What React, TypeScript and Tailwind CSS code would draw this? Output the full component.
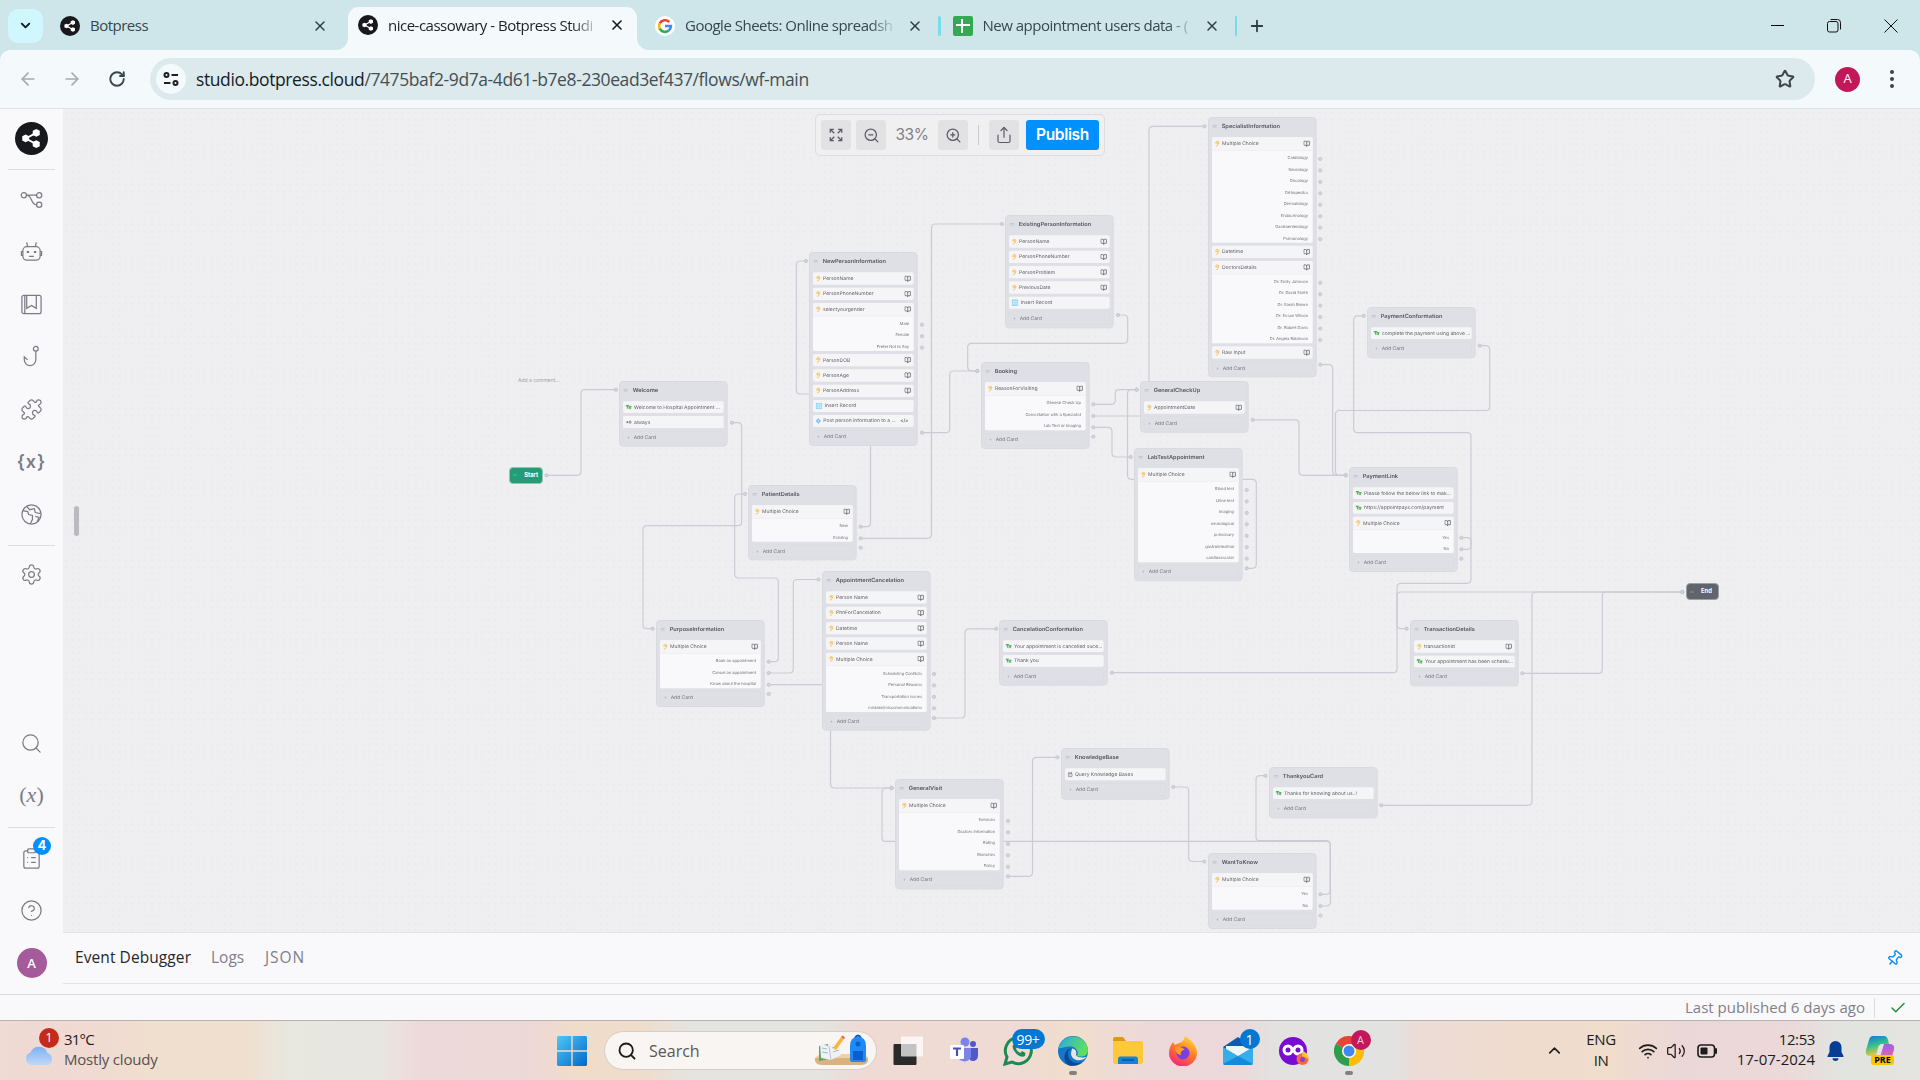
import React from "react";
import {
  ArrowLeft, ArrowRight, RotateCw, X, Plus, Star, ChevronDown, ChevronUp, ZoomIn, ZoomOut, Search, Puzzle,
  Settings, CircleHelp, Pin, Check, Share, Wifi, Volume2, ClipboardList, BookOpen,
} from "lucide-react";

type Card = { k: "ask" | "text" | "always" | "insert" | "post" | "kb"; t: string; o?: string[] };
type NodeT = { x: number; y: number; h: number; t: string; c: Card[] };
const a = (t: string, o?: string[]): Card => ({ k: "ask", t, o });
const s = (t: string): Card => ({ k: "text", t });

const nodes: NodeT[] = [
  { x: 619.3, y: 381, h: 65.7, t: "Welcome", c: [s("Welcome to Hospital Appointment ..."), { k: "always", t: "always" }] },
  {
    x: 809.3, y: 252, h: 194, t: "NewPersonInformation",
    c: [a("PersonName"), a("PersonPhoneNumber"), a("selectyourgender", ["Male", "Female", "Prefer Not to Say"]), a("PersonDOB"), a("PersonAge"), a("PersonAddress"), { k: "insert", t: "Insert Record" }, { k: "post", t: "Post person information to a ..." }],
  },
  { x: 748.3, y: 485.3, h: 75.4, t: "PatientDetails", c: [a("Multiple Choice", ["New", "Existing"])] },
  { x: 1005.3, y: 215, h: 113.3, t: "ExistingPersonInformation", c: [a("PersonName"), a("PersonPhoneNumber"), a("PersonProblem"), a("PreviousDate"), { k: "insert", t: "Insert Record" }] },
  { x: 981.3, y: 362.3, h: 87, t: "Booking", c: [a("ReasonForVisiting", ["General Check Up", "Consultation with a Specialist", "Lab Test or Imaging"])] },
  { x: 1134.3, y: 448, h: 133.3, t: "LabTestAppointment", c: [a("Multiple Choice", ["Blood test", "Urine test", "Imaging", "neurological", "pulmonary", "gastrointestinal", "cardiovascular"])] },
  {
    x: 1208.3, y: 117.3, h: 260.3, t: "SpecialistInformation",
    c: [
      a("Multiple Choice", ["Cardiology", "Neurology", "Oncology", "Orthopedics", "Dermatology", "Endocrinology", "Gastroenterology", "Pulmonology"]),
      a("Datetime"),
      a("DoctorsDetails", ["Dr. Emily Johnson", "Dr. David Smith", "Dr. Sarah Brown", "Dr. Susan Wilson", "Dr. Robert Davis", "Dr. Angela Robinson"]),
      a("Raw Input"),
    ],
  },
  { x: 1140.3, y: 381, h: 51.7, t: "GeneralCheckUp", c: [a("AppointmentDate")] },
  { x: 1367.3, y: 307.3, h: 51.4, t: "PaymentConformation", c: [s("complete the payment using above ...")] },
  { x: 1349.3, y: 466.7, h: 105, t: "PaymentLink", c: [s("Please follow the below link to mak..."), s("https://appointpays.com/payment"), a("Multiple Choice", ["Yes", "No"])] },
  { x: 1410.3, y: 620, h: 66.3, t: "TransactionDetails", c: [a("transactionId"), s("Your appointment has been schedu...")] },
  {
    x: 822.3, y: 571, h: 159.5, t: "AppointmentCancelation",
    c: [a("Person Name"), a("PhnForCancelation"), a("Datetime"), a("Person Name"), a("Multiple Choice", ["Scheduling Conflicts", "Personal Reasons", "Transportation issues", "mistake/miscommunications"])],
  },
  { x: 656.3, y: 620, h: 87, t: "PurposeInformation", c: [a("Multiple Choice", ["Book an appointment", "Cancel an appointment", "Know about the hospital"])] },
  { x: 999.3, y: 620, h: 65.7, t: "CancelationConformation", c: [s("Your appointment is cancelled suce..."), s("Thank you")] },
  { x: 895.3, y: 779.3, h: 110.4, t: "GeneralVisit", c: [a("Multiple Choice", ["Services", "Doctors Information", "Rating", "Branches", "Policy"])] },
  { x: 1061.3, y: 748.3, h: 51.7, t: "KnowledgeBase", c: [{ k: "kb", t: "Query Knowledge Bases" }] },
  { x: 1269.3, y: 767, h: 51.3, t: "ThankyouCard", c: [s("Thanks for knowing about us..!")] },
  { x: 1208.3, y: 852.7, h: 76, t: "WantToKnow", c: [a("Multiple Choice", ["Yes", "No"])] },
];

// Connector polylines in window coordinates; corners are rounded when drawn.
const edges: number[][] = [
  [546.5, 475.3, 581, 475.3, 581, 389.7, 616, 389.7],
  [732, 422.7, 741.7, 422.7, 741.7, 525.7, 643, 525.7, 643, 628.7, 652.7, 628.7],
  [768.7, 661.7, 778.3, 661.7, 778.3, 578, 734.7, 578, 734.7, 494, 745, 494],
  [768.7, 673, 793.3, 673, 793.3, 579.5, 818.5, 579.5],
  [768.7, 684.7, 830.5, 684.7, 830.5, 788, 891.7, 788],
  [860.7, 526.7, 870.5, 526.7, 870.5, 394, 796.3, 394, 796.3, 261, 806, 261],
  [860.7, 538.3, 931.5, 538.3, 931.5, 224, 1002, 224],
  [922, 432.7, 949.7, 432.7, 949.7, 371, 977.3, 371],
  [1118, 315, 1127.7, 315, 1127.7, 343.3, 967.7, 343.3, 967.7, 371, 977.3, 371],
  [1093.3, 404.3, 1115.3, 404.3, 1115.3, 389.7, 1136.7, 389.7],
  [1093.3, 416, 1149, 416, 1149, 126.3, 1204.5, 126.3],
  [1093.3, 427.3, 1112, 427.3, 1112, 457, 1130.7, 457],
  [1246.7, 568.3, 1256.3, 568.3, 1256.3, 479.3, 1127.5, 479.3, 1127.5, 389.7, 1136.7, 389.7],
  [1252.7, 419.8, 1299, 419.8, 1299, 475.3, 1345.7, 475.3],
  [1320.3, 364.7, 1332.7, 364.7, 1332.7, 475.3, 1345.7, 475.3],
  [1479.7, 345.7, 1489.7, 345.7, 1489.7, 410.5, 1335.5, 410.5, 1335.5, 475.3, 1345.7, 475.3],
  [1461.3, 549.3, 1471, 549.3, 1471, 432.7, 1353.7, 432.7, 1353.7, 315.8, 1363.7, 315.8],
  [1461.3, 537.7, 1471, 537.7, 1471, 583.3, 1397, 583.3, 1397, 628.7, 1406.7, 628.7],
  [1112, 672.7, 1397, 672.7, 1397, 592, 1682.3, 592],
  [1522.3, 673.3, 1602.3, 673.3, 1602.3, 592, 1682.3, 592],
  [1381.3, 805.3, 1532, 805.3, 1532, 592, 1682.3, 592],
  [934, 718, 965, 718, 965, 628.8, 996.3, 628.8],
  [1008, 876.3, 1032.5, 876.3, 1032.5, 757.3, 1057.5, 757.3],
  [1173.3, 787, 1188.7, 787, 1188.7, 861.5, 1204.3, 861.5],
  [1320.5, 894.3, 1330.2, 894.3, 1330.2, 840.7, 1256, 840.7, 1256, 775.7, 1265.5, 775.7],
  [1320.5, 906, 1330.4, 906, 1330.4, 841.4, 882, 841.4, 882, 788, 891.7, 788],
];

// Ports without a connector: x, first y, count.
const loose: [number, number, number][] = [
  [922, 324.7, 3], [1246.7, 490, 7], [1320.3, 159, 8], [1320.3, 282.7, 6], [934, 674, 4], [1008, 821, 5],
  [860.7, 547.7, 1], [1093.3, 436.7, 1], [768.7, 694, 1], [1461.3, 558.7, 1], [1320.5, 915.5, 1],
];

function roundPath(p: number[]) {
  const r = 4;
  let d = `M${p[0]} ${p[1]}`;
  for (let i = 2; i < p.length - 2; i += 2) {
    const [px, py, x, y, nx, ny] = [p[i - 2], p[i - 1], p[i], p[i + 1], p[i + 2], p[i + 3]];
    const ux = Math.sign(px - x), uy = Math.sign(py - y), vx = Math.sign(nx - x), vy = Math.sign(ny - y);
    d += `L${x + ux * r} ${y + uy * r}Q${x} ${y} ${x + vx * r} ${y + vy * r}`;
  }
  return d + `L${p[p.length - 2]} ${p[p.length - 1]}`;
}

function Edges() {
  const ports: [number, number][] = [];
  edges.forEach((e) => { ports.push([e[0], e[1]]); ports.push([e[e.length - 2], e[e.length - 1]]); });
  loose.forEach(([x, y, n]) => { for (let i = 0; i < n; i++) ports.push([x, y + i * 11.45]); });
  return (
    <svg className="absolute inset-0" width="1857" height="824" viewBox="63 109 1857 824" fill="none">
      {edges.map((e, i) => <path key={i} d={roundPath(e)} stroke="#cbcbd6" strokeWidth="1.2" />)}
      {ports.map(([x, y], i) => <circle key={i} cx={x} cy={y} r="1.6" fill="#d6d6de" stroke="#c3c3cf" strokeWidth="0.9" />)}
    </svg>
  );
}

function CardIcon({ k }: { k: Card["k"] }) {
  if (k === "ask")
    return (
      <svg className="w-[15px] h-[18px] shrink-0" viewBox="0 0 10 12" fill="none" stroke="#fbb52e" strokeWidth="1.6" strokeLinecap="round">
        <path d="M2 4.5C2 2 3.500 1 5.300 1S8.600 2.400 8.600 4.400C8.600 7 6 7.500 5.600 9.500 5.300 11 3.500 11.300 2.800 10.300" /><path d="M4 5C4 3.800 4.500 3.300 5.400 3.300S6.600 4.500 5.400 6" />
      </svg>
    );
  if (k === "text")
    return (
      <svg className="w-[18px] h-[15px] shrink-0" viewBox="0 0 12 10" fill="none" stroke="#4cb050" strokeWidth="2">
        <path d="M0 1.500H7M1 1V4M3.500 1.500V8M5.500 4H12M7 4V9M10 4V9" />
      </svg>
    );
  if (k === "always")
    return <svg className="w-[18px] h-[15px] shrink-0" viewBox="0 0 12 10" fill="none" stroke="#66666c" strokeWidth="1.5"><path d="M0 5H5M3 3L5 5 3 7" /><circle cx="9" cy="5" r="2.200" /></svg>;
  if (k === "insert")
    return <svg className="w-[20px] h-[20px] shrink-0" viewBox="0 0 14 14"><rect width="14" height="14" rx="2" fill="#8ad6f7" /><path d="M1 5H13M1 9.500H13M5 1V13M9.500 1V13" stroke="#e8f7fd" strokeWidth="1.200" /></svg>;
  if (k === "post")
    return <svg className="w-[16px] h-[18px] shrink-0" viewBox="0 0 12 12"><path d="M6 0L12 6 6 12 0 6Z" fill="#7db9f2" /><path d="M6 3V9M3 6H9" stroke="#e3f1fd" /></svg>;
  return <svg className="w-[15px] h-[18px] shrink-0" viewBox="0 0 10 12" fill="none" stroke="#55555c" strokeWidth="1.300"><rect x="1" y="4" width="8" height="7" rx="2" /><path d="M2.500 1V3.500M7.500 1V3.500M3.500 6.500V8M6.500 6.500V8" /></svg>;
}

function CardView({ c }: { c: Card }) {
  const row = (
    <>
      <CardIcon k={c.k} />
      <span className="pl-[7px]">{c.t}</span>
      <span className="grow" />
      {c.k === "ask" && <BookOpen className="w-[20px] h-[20px] shrink-0 text-[#5c5c62]" strokeWidth={2.6} />}
      {c.k === "post" && <span className="font-semibold text-[14px] pr-[8px]">&lt;/&gt;</span>}
    </>
  );
  if (!c.o)
    return (
      <div className={`${c.k === "ask" ? "h-[37px]" : c.k === "text" ? "h-[35px]" : "h-[36px]"} shrink-0 flex items-center rounded-[5px] bg-[#f5f5f7] pl-[8px] pr-[8px] whitespace-nowrap`}>{row}</div>
    );
  return (
    <div className="shrink-0 rounded-[5px] bg-[#f9f9fb] overflow-hidden">
      <div className="h-[40px] flex items-center bg-[#f5f5f7] border-b-2 border-[#ededf0] pl-[8px] pr-[8px] whitespace-nowrap">{row}</div>
      {c.o.map((o) => (
        <div key={o} className="h-[34.5px] flex items-center justify-end pr-[14px] pt-[9px] text-[12px] text-[#737379] whitespace-nowrap">{o}</div>
      ))}
    </div>
  );
}

// Nodes are laid out at 3x and scaled down, which is the canvas' zoom level.
function FlowNode({ n }: { n: NodeT }) {
  return (
    <div
      className="absolute w-[326px] origin-top-left scale-[0.33333] [text-rendering:geometricPrecision] rounded-[12px] border-[3px] border-[#d9dae0] bg-[#dfe0e6] px-[9px] flex flex-col gap-[9px] text-[15px] text-[#5f5f66]"
      style={{ left: n.x - 63, top: n.y - 109, height: n.h * 3 }}
    >
      <div className="h-[49px] shrink-0 flex items-center pl-[2px] gap-[15px]">
        <span className="w-[12px] h-[7px] border-y-2 border-[#b9bac2]" />
        <span className="text-[17px] font-semibold text-[#55565d]">{n.t}</span>
      </div>
      {n.c.map((c, i) => <CardView key={i} c={c} />)}
      <div className="h-[38px] shrink-0 flex items-center pl-[10px] gap-[11px] rounded-[5px] border border-[#d7d8de] text-[#75767c]">
        <span className="text-[#a0a1a9]">+</span><span>Add Card</span>
      </div>
    </div>
  );
}

const Botp = ({ className }: { className: string }) => (
  <svg viewBox="0 0 32 32" className={className}>
    <circle cx="16" cy="16" r="16" fill="#17191c" />
    <path d="M20.500 10.500L10.500 16L20.500 21.500" stroke="#fff" strokeWidth="1.800" fill="none" />
    <g fill="#fff"><path d="M7 13.900l3.300-1.700 3.400 1.700v4l-3.400 1.700L7 17.900z" /><path d="M17.200 8.500l3.400-1.700L24 8.500v4l-3.400 1.700-3.400-1.700z" /><path d="M17.200 19.500l3.400-1.700 3.400 1.700v4l-3.400 1.700-3.400-1.700z" /></g>
  </svg>
);

function TabTitle({ children, w, active, fade }: { children: string; w: string; active?: boolean; fade?: boolean }) {
  return (
    <span className={`${w} ${active ? "text-[#1b2225]" : "text-[#37474b]"} shrink-0 ml-[10px] whitespace-nowrap text-[15px] leading-[22px] pb-[1px] tracking-[-0.5px] ${fade ? "[mask-image:linear-gradient(to_right,#000_185px,transparent_212px)]" : ""}`}>{children}</span>
  );
}

function TopTabs() {
  const x = "w-4 h-4 shrink-0";
  return (
    <div className="h-[50px] bg-[#cee6ea] flex items-end text-[#2c3e42]">
      <div className="h-[42px] w-full flex items-center pb-[7px]">
        <div className="ml-2 w-[35px] h-[34px] shrink-0 rounded-[10px] bg-[#d0f6fe] flex items-center justify-center text-[#10191b]"><ChevronDown className="w-[15px] h-[15px]" strokeWidth={3} /></div>
        <Botp className="w-5 h-5 ml-[17px] shrink-0" />
        <TabTitle w="w-[222px]">Botpress</TabTitle>
        <X className={x} strokeWidth={2.2} />
        <div className="relative ml-[20px] w-[289px] shrink-0 self-stretch -mb-[7px] rounded-t-[11px] bg-[#f4f9fc] flex items-center pb-[7px] pl-[10px] -mt-[1px]">
          <svg className="absolute -left-3 bottom-0" width="12" height="12"><path d="M12 0V12H0A12 12 0 0 0 12 0" fill="#f4f9fc" /></svg>
          <svg className="absolute -right-3 bottom-0" width="12" height="12"><path d="M0 0V12H12A12 12 0 0 1 0 0" fill="#f4f9fc" /></svg>
          <Botp className="w-5 h-5 shrink-0" />
          <TabTitle w="w-[215px]" active fade>nice-cassowary - Botpress Studi</TabTitle>
          <X className={`${x} ml-[6px] text-[#10191b]`} strokeWidth={2.4} />
        </div>
        <svg className="ml-[18px] w-5 h-5 shrink-0" viewBox="0 0 20 20"><circle cx="10" cy="10" r="10" fill="#fff" />
          <g fill="none" strokeWidth="2.600"><path d="M14.200 6A6 6 0 0 0 4.700 7.400" stroke="#ea4335" /><path d="M4.700 7.400A6 6 0 0 0 4.700 12.700" stroke="#fbbc05" /><path d="M4.700 12.700A6 6 0 0 0 13.700 14.600" stroke="#34a853" /><path d="M13.700 14.600A6 6 0 0 0 15.900 10H10" stroke="#4285f4" /></g></svg>
        <TabTitle w="w-[222px]" fade>Google Sheets: Online spreadsh</TabTitle>
        <X className={x} strokeWidth={2.2} />
        <div className="ml-[15px] w-[2.500px] h-5 shrink-0 rounded bg-[#78dbea]" />
        <div className="ml-[12px] w-5 h-5 rounded-[2px] bg-[#34a853] relative shrink-0"><span className="absolute left-[3px] right-[3px] top-[8px] h-[2.500px] bg-white" /><span className="absolute left-[8px] top-[3px] bottom-[3px] w-[2.500px] bg-white" /></div>
        <TabTitle w="w-[221px]" fade>New appointment users data - (</TabTitle>
        <X className={x} strokeWidth={2.2} />
        <div className="ml-[15px] w-[2.500px] h-5 shrink-0 rounded bg-[#78dbea]" />
        <Plus className="ml-[11px] w-[18px] h-[18px] shrink-0" strokeWidth={2.400} />
        <div className="grow" />
        <div className="flex items-center text-black mr-[22px]">
          <span className="w-[13px] h-[1px] bg-black" />
          <svg className="ml-[43px]" width="14" height="14" viewBox="0 0 14 14" fill="none" stroke="#111"><rect x="0.500" y="2.500" width="10.500" height="10.500" rx="2" /><path d="M3.500 0.500H10.500Q13.500 0.500 13.500 3.500V10.500" /></svg>
          <svg className="ml-[43px]" width="14" height="14" viewBox="0 0 14 14" stroke="#111"><path d="M0.500 0.500L13.500 13.500M13.500 0.500L0.500 13.500" /></svg>
        </div>
      </div>
    </div>
  );
}

function AddressBar() {
  return (
    <div className="bg-[#cee6ea] h-[58px]">
      <div className="h-[58px] bg-[#f4f9fc] rounded-t-[10px] flex items-center">
        <ArrowLeft className="ml-[18px] w-[20px] h-[20px] text-[#a3acaf]" strokeWidth={2} />
        <ArrowRight className="ml-[24px] w-[20px] h-[20px] text-[#a3acaf]" strokeWidth={2} />
        <RotateCw className="ml-[26px] w-[18px] h-[18px] text-[#37474b]" strokeWidth={2.500} />
        <div className="ml-[24px] w-[1665px] h-[42px] rounded-full bg-[#dceaee] flex items-center pl-[6px] pr-[20px]">
          <div className="w-[30px] h-[30px] rounded-full bg-[#f4f9fc] flex items-center justify-center">
            <svg width="16" height="14" viewBox="0 0 16 14" fill="none" stroke="#1b2225" strokeWidth="2"><circle cx="3.500" cy="3" r="2" /><path d="M8.500 3H15M1 11H7.500" /><circle cx="12.500" cy="11" r="2" /></svg>
          </div>
          <span className="ml-[10px] pt-[1px] text-[17.500px] tracking-[-0.4px] text-[#454f53] whitespace-nowrap"><span className="text-[#161c1f]">studio.botpress.cloud</span>/7475baf2-9d7a-4d61-b7e8-230ead3ef437/flows/wf-main</span>
          <span className="grow" />
          <Star className="w-[20px] h-[20px] text-[#3d4649]" strokeWidth={2.400} />
        </div>
        <div className="ml-[20px] w-[25px] h-[25px] rounded-full bg-[#c2185b] text-white text-[13px] flex items-center justify-center">A</div>
        <svg className="ml-[30px]" width="4" height="18" fill="#37474b"><circle cx="2" cy="2" r="2" /><circle cx="2" cy="9" r="2" /><circle cx="2" cy="16" r="2" /></svg>
      </div>
    </div>
  );
}

function Sidebar() {
  const cls = "w-[23px] h-[23px]";
  const p = { viewBox: "0 0 24 24", fill: "none", stroke: "currentColor", strokeWidth: 1.300, className: cls };
  const row = "h-[52.500px] shrink-0 flex items-center justify-center";
  const hr = "h-px w-[47px] shrink-0 bg-[#dcdce1]";
  return (
    <div className="w-[63px] shrink-0 bg-[#f9f9fb] flex flex-col items-center text-[#7b7b86] pt-[13px]">
      <Botp className="w-[33px] h-[33px] shrink-0" />
      <div className={`${hr} mt-[14px] mb-[3px]`} />
      <div className={row}><svg {...p}><circle cx="4" cy="7.500" r="2.700" /><circle cx="20" cy="7.500" r="2.700" /><circle cx="20" cy="17.500" r="2.700" /><path d="M6.700 7.500H17.300M6.700 7.500C13 7.500 11 17.500 17.300 17.500" /></svg></div>
      <div className={row}><svg {...p}><rect x="3" y="7" width="18" height="14" rx="4" /><path d="M8 7L7 2.500M16 7L17 2.500M3 12H1.500V16H3M21 12H22.500V16H21M9.500 17H14.500" /><path d="M7 12.500H9.500M14.500 12.500H17" strokeWidth="2" /></svg></div>
      <div className={row}><svg {...p}><rect x="2" y="2.500" width="20" height="19" rx="2" /><path d="M7 2.500V16L12 13 17 16V2.500M5 2.500V21" /></svg></div>
      <div className={row}><svg {...p}><circle cx="16.500" cy="4" r="2.500" /><path d="M16.500 6.500V15.500A6 6 0 0 1 4.500 15.500V12.500L8 15.500" /></svg></div>
      <div className={row}><Puzzle className={cls} strokeWidth={1.300} /></div>
      <div className={`${row} text-[18px] font-semibold font-['Inter'] tracking-[1px]`}>{"{x}"}</div>
      <div className={row}><svg {...p}><circle cx="12" cy="12" r="10" /><path d="M3 8L8 9 9 12 13 13 13 17 11 21.500M7 3.500L10 7 15 6 16 10 21.500 11M16 14L20 15 18 19" /></svg></div>
      <div className={`${hr} mt-[4px] mb-[3px]`} />
      <div className={row}><Settings className={cls} strokeWidth={1.300} /></div>
      <div className="h-[116px] shrink-0" />
      <div className={row}><Search className={cls} strokeWidth={1.300} /></div>
      <div className={`${row} font-['Liberation_Serif'] text-[22px] pb-[2px]`}>(<i>x</i>)</div>
      <div className={`${hr} mt-[5px] mb-[4px]`} />
      <div className={`${row} relative`}>
        <ClipboardList className={cls} strokeWidth={1.300} />
        <span className="absolute left-[13px] top-[5px] w-[18px] h-[18px] rounded-full bg-[#0090ff] text-white text-[13px] font-bold flex items-center justify-center font-['Inter']">4</span>
      </div>
      <div className={row}><CircleHelp className={cls} strokeWidth={1.300} /></div>
      <div className={row}><div className="w-[30px] h-[30px] rounded-full bg-[#a55a9b] text-white text-[13px] font-semibold flex items-center justify-center">A</div></div>
    </div>
  );
}

function Canvas() {
  const b = "h-[30px] w-[30px] rounded-[3px] bg-[#e2e2e5] flex items-center justify-center";
  return (
    <div className="relative h-[823px] shrink-0 overflow-hidden bg-[#efeff1] bg-[radial-gradient(#e6e6ea_0.8px,transparent_1px)] bg-[size:6.600px_6.600px] font-['Inter']">
      <Edges />
      <div className="absolute left-[11px] top-[397px] w-[5px] h-[30px] rounded-full bg-[#bbbac0]" />
      <span className="absolute left-[455px] top-[268px] text-[5px] text-[#a3a3a9] whitespace-nowrap">Add a comment...</span>
      <div className="absolute left-[446.300px] top-[358px] w-[33.400px] h-[16.600px] rounded-[4px] bg-[#279a78] border border-[#8fc5b3] text-white text-[5.800px] font-bold flex items-center pl-[2.500px] gap-[7.500px]"><span className="w-[4px] h-[2px] border-y-[0.500px] border-[#5db598] opacity-50" />Start</div>
      <div className="absolute left-[1623px] top-[474.300px] w-[33.200px] h-[16.600px] rounded-[4px] bg-[#60646c] border border-[#9c9fa5] text-white text-[5.800px] font-bold flex items-center pl-[2.500px] gap-[7.500px]"><span className="w-[4px] h-[2px] border-y-[0.500px] border-[#8d9098] opacity-50" />End</div>
      {nodes.map((n) => <FlowNode key={n.t} n={n} />)}
      <div className="absolute left-[752px] top-[5px] w-[290px] h-[42px] rounded-[5px] border border-[#dcdce1] bg-[#f0f0f1] flex items-center pl-[5px] text-[#5c5c64] font-['Inter']">
        <div className={b}>
          <svg width="14" height="14" viewBox="0 0 16 16" fill="none" stroke="currentColor" strokeWidth="1.500"><path d="M1.500 5.500V1.500H5.500M1.500 1.500L6 6M10.500 1.500H14.500V5.500M14.500 1.500L10 6M1.500 10.500V14.500H5.500M1.500 14.500L6 10M10.500 14.500H14.500V10.500M14.500 14.500L10 10" /></svg>
        </div>
        <div className={`${b} ml-[5px]`}><ZoomOut className="w-[17px] h-[17px]" strokeWidth={1.800} /></div>
        <span className="w-[52px] text-center text-[15.500px] tracking-[-0.4px] text-[#80808a]">33%</span>
        <div className={b}><ZoomIn className="w-[17px] h-[17px]" strokeWidth={1.800} /></div>
        <div className="w-px h-5 bg-[#c9c9d0] mx-[10px]" />
        <div className={b}><Share className="w-[18px] h-[18px]" strokeWidth={1.600} /></div>
        <div className="ml-[7px] w-[73px] h-[30px] rounded-[3px] bg-[#0090ff] text-white text-[15.500px] font-semibold tracking-[-0.35px] flex items-center justify-center">Publish</div>
      </div>
    </div>
  );
}

const Dot = () => <span className="absolute bottom-[5px] w-2 h-[4px] rounded-full bg-[#85807d]" />;

function Taskbar() {
  const cell = "relative w-[55px] h-full flex items-center justify-center shrink-0";
  return (
    <div className="h-[60px] border-t border-[#b9b3b0] flex items-center text-[#1c1c1c] bg-[linear-gradient(90deg,#efdad4_0,#f0dad2_90px,#f0dfce_160px,#f0dfce_245px,#e8e7e0_290px,#e8e6e1_380px,#eed9da_420px,#edd8d8_530px,#f0dccb_570px,#f0dccb_640px,#e4e4e0_690px,#e4e4e0_820px,#efdad4_860px,#f0dad4_1020px,#f1decc_1070px,#edd9da_1150px,#ecd8da_1230px,#e2e3e1_1280px,#e2e3e1_1390px,#eddbd6_1420px,#f0dccd_1530px,#f0ddcc_1610px,#ecd7d8_1680px,#ecd8d8_1780px,#e2e4e0_1840px,#e4e4e0_1920px)]">
      <div className="relative ml-[24px] w-[31px] h-[38px]">
        <svg className="absolute bottom-[4px]" width="31" height="22" viewBox="0 0 31 22"><defs><linearGradient id="cl" x2="0" y2="1"><stop stopColor="#7fb0f2" /><stop offset="1" stopColor="#bfd8f8" /></linearGradient></defs><path d="M7 21A6.500 6.500 0 0 1 6.500 8.500 9 9 0 0 1 23.500 9 6.500 6.500 0 0 1 24.500 21Z" fill="url(#cl)" /></svg>
        <span className="absolute left-[15px] -top-[4px] w-5 h-5 rounded-full bg-[#c42b1c] text-white text-[13px] flex items-center justify-center">1</span>
      </div>
      <div className="ml-[9px] w-[480.500px] pb-[4px] text-[15px] leading-[20px] tracking-[-0.2px]"><div className="tracking-[-0.8px]">31°C</div><div className="text-[#55514f]">Mostly cloudy</div></div>
      <div className={cell}><svg width="30" height="30" viewBox="0 0 30 30"><defs><linearGradient id="w" x2="1" y2="1"><stop stopColor="#4cc8f8" /><stop offset="1" stopColor="#0468c8" /></linearGradient></defs><path d="M1 0H14.300V14.300H0V1ZM15.700 0H29L30 1V14.300H15.700ZM0 15.700H14.300V30H1L0 29ZM15.700 15.700H30V29L29 30H15.700Z" fill="url(#w)" /></svg></div>
      <div className="ml-[4.500px] w-[273px] h-[39px] rounded-full bg-[#f8f5f2] border border-[#d6cdc8] flex items-center pl-[12px] pr-[6px] shrink-0">
        <Search className="w-[20px] h-[20px]" strokeWidth={2.200} />
        <span className="ml-[12px] text-[16px] tracking-[0px] text-[#5c5856]">Search</span><span className="grow" />
        <svg width="57" height="34" viewBox="0 0 57 34">
          <path d="M2 24H55Q56 31 48 31H9Q1 31 2 24Z" fill="#d9b183" /><path d="M2 24Q5 20 12 20H46Q54 20 55 24Z" fill="#edd0a8" />
          <path d="M6 12L15 10 16 25 6 27Z" fill="#5aa55f" /><path d="M7 10L16 12 26 8 28 21 18 26 8 24Z" fill="#eef2f7" /><path d="M16 12L18 26" stroke="#b9c3d0" /><path d="M9 14L14 15M9 18L15 19M19 14L25 12M20 18L26 16" stroke="#a9b6c6" /><path d="M20 14L28 3 31 5 23 16Z" fill="#f7b73c" /><path d="M28 3L29.500 1.500 32 3.500 31 5Z" fill="#ec5b55" />
          <path d="M42 4Q45 -1 48 4" stroke="#0b55b8" strokeWidth="2" fill="none" /><path d="M37 26V12Q37 3 45 3T53 12V26Q53 28 50 28H40Q37 28 37 26Z" fill="#1e8af5" /><path d="M40 17H50V26H40Z" fill="#0a5fd0" /><circle cx="45" cy="10" r="2.500" fill="#0a5fd0" />
        </svg>
      </div>
      <div className={`${cell} ml-[3.500px]`}><svg width="30" height="30" viewBox="0 0 30 30"><rect x="0.500" y="8" width="23" height="21" rx="1" fill="#2a2a2a" /><rect x="8" y="0.500" width="22" height="20" rx="1" fill="#fff" fillOpacity="0.720" /></svg></div>
      <div className={cell}><svg width="30" height="28" viewBox="0 0 30 28"><circle cx="17" cy="5" r="4.500" fill="#7b83eb" /><circle cx="25" cy="7" r="3" fill="#5059c9" /><path d="M21 11H30V19A5 5 0 0 1 22 23Z" fill="#5059c9" /><path d="M10 11H23V20A7 7 0 0 1 10 20Z" fill="#7b83eb" /><rect x="2" y="8" width="14" height="14" rx="1" fill="#fff" /><path d="M5 11.500H13M9 11.500V19" stroke="#4b53bc" strokeWidth="2.200" /></svg></div>
      <div className={cell}>
        <svg width="31" height="31" viewBox="0 0 31 31" fill="none"><path d="M2 29L4 22A13 13 0 1 1 9 27Z" stroke="#1e8a52" strokeWidth="3" /><path d="M11 9C9 10 9 13 12 17S19 23 22 21L22.500 18 19 16 17.500 18C15 17 13.500 15 13 13.500L14.500 12 13 9Z" fill="#1e8a52" /></svg>
        <span className="absolute left-[21px] top-[8px] w-[33px] h-[20px] rounded-full bg-[#0078d4] text-white text-[14px] tracking-[-0.4px] flex items-center justify-center">99+</span>
      </div>
      <div className={cell}><svg width="30" height="30" viewBox="0 0 30 30"><defs><linearGradient id="e1" x2="1" y2="0.300"><stop stopColor="#2aa8e8" /><stop offset="1" stopColor="#5fe05a" /></linearGradient></defs><circle cx="15" cy="15" r="15" fill="#1376c8" /><path d="M0.500 12A15 15 0 0 1 30 14C30 20 25 21.500 19 20 21 17 19 11 13 10.500 7 10 2 13 0.500 12Z" fill="url(#e1)" /><path d="M10 18C10 25 17 29 24 26A15 15 0 0 1 11 29.500C4 26 5 13 14 12 10 14 10 16 10 18Z" fill="#0c4a95" /><path d="M14 12.500C18 13 19 16 18 19 20 22 26 22 28.500 20.500 26 26 14 26 13 18 13 15 14 14 14 12.500Z" fill="#e9e4df" /></svg><Dot /></div>
      <div className={cell}><svg width="30" height="28" viewBox="0 0 30 28"><path d="M0 2Q0 0 2 0H10L13 4H0Z" fill="#dc9a10" /><path d="M0 4H28Q30 4 30 6V25Q30 27 28 27H2Q0 27 0 25Z" fill="#fdc93a" /><path d="M5 27V22Q5 19.500 7 19.500H23Q25 19.500 25 22V27Z" fill="#1583d8" /><path d="M9 23H21" stroke="#0a4f96" strokeWidth="1.500" /></svg></div>
      <div className={cell}><svg width="30" height="30" viewBox="0 0 30 30"><defs><linearGradient id="ff" x1="0.800" y1="0" x2="0.300" y2="1"><stop stopColor="#ffe23c" /><stop offset="0.500" stopColor="#ff7a25" /><stop offset="1" stopColor="#f5247a" /></linearGradient></defs><path d="M17 0C23 4 29 9 29 17A14 13.500 0 0 1 1 17C1 12 3 9 5 6L7 9C10 7 16 7 17 0Z" fill="url(#ff)" /><circle cx="15" cy="17" r="6.500" fill="#7a3fe0" /><path d="M7 11C12 10 15 12 17 14 14 14 12 16 13 19 9 19 7 15 7 11Z" fill="#ff9a2c" /></svg></div>
      <div className={cell}>
        <svg width="30" height="28" viewBox="0 0 30 28"><path d="M0 10L15 0 30 10V20H0Z" fill="#0b5cab" /><path d="M3 9H27V18L15 21 3 18Z" fill="#f2f5f8" /><path d="M0 10L15 19 30 10V26Q30 28 28 28H2Q0 28 0 26Z" fill="#35aeea" /><path d="M0 27L15 19 30 27 28 28H2Z" fill="#1689d8" /></svg>
        <span className="absolute left-[29px] top-[8px] w-5 h-5 rounded-full bg-[#0078d4] text-white text-[14px] flex items-center justify-center">1</span>
      </div>
      <div className={`${cell} left-[1px]`}><svg width="30" height="30" viewBox="0 0 30 30"><circle cx="14" cy="15" r="14" fill="#7a0bd0" /><circle cx="9" cy="14" r="4" fill="none" stroke="#fff" strokeWidth="3" /><circle cx="19" cy="14" r="4" fill="none" stroke="#fff" strokeWidth="3" /><circle cx="23.500" cy="23" r="6" fill="#ff6a2c" /><path d="M24 15C28 17 30 20 29.500 23L23 20Z" fill="#ffc532" /><circle cx="23.500" cy="23.500" r="2.500" fill="#8a3fd8" /></svg></div>
      <div className={`${cell} left-[1px]`}>
        <svg width="30" height="30" viewBox="0 0 30 30"><path d="M15 15L2 7.500A15 15 0 0 1 28 7.500Z" fill="#ea4335" /><path d="M15 15L28 7.500A15 15 0 0 1 15 30Z" fill="#fbbc05" /><path d="M15 15L15 30A15 15 0 0 1 2 7.500Z" fill="#2f9e4a" /><path d="M15 8H28.300A15 15 0 0 1 15 30L21 18Z" fill="#fbbc05" /><circle cx="15" cy="15" r="7" fill="#fff" /><circle cx="15" cy="15" r="5.500" fill="#4285f4" /></svg>
        <span className="absolute left-[29px] top-[9px] w-5 h-5 rounded-full bg-[#c2185b] text-[#f3c6d8] text-[11px] flex items-center justify-center">A</span><Dot />
      </div>
      <div className="grow" />
      <ChevronUp className="w-[19px] h-[19px]" strokeWidth={2} />
      <div className="ml-[20px] w-[34px] pb-[2px] text-center text-[15px] leading-[20.500px] tracking-[-0.4px]"><div>ENG</div><div>IN</div></div>
      <Wifi className="ml-[20px] w-[20px] h-[20px]" strokeWidth={2} />
      <Volume2 className="ml-[8px] w-[20px] h-[20px]" strokeWidth={1.500} />
      <svg className="ml-[11px]" width="21" height="14" viewBox="0 0 21 14"><rect x="1" y="1" width="16.500" height="12" rx="3" fill="none" stroke="#1c1c1c" strokeWidth="1.600" /><rect x="3.500" y="3.500" width="7" height="7" rx="1" fill="#1c1c1c" /><path d="M19 5V9" stroke="#1c1c1c" strokeWidth="2" strokeLinecap="round" /></svg>
      <div className="w-[97px] pb-[3px] text-right text-[15px] leading-[20.500px] tracking-[0px]"><div className="tracking-[-0.4px]">12:53</div><div>17-07-2024</div></div>
      <svg className="ml-[12px]" width="17" height="20" viewBox="0 0 17 20" fill="#063e96"><path d="M8.500 0A6 6 0 0 1 14.500 6V11L16.500 15V16H0.500V15L2.500 11V6A6 6 0 0 1 8.500 0ZM5.500 17.300H11.500A3 2.600 0 0 1 5.500 17.300Z" /></svg>
      <div className="relative ml-[21px] mr-[25px] w-[30px] h-[30px]">
        <svg width="30" height="28" viewBox="0 0 30 28"><defs><linearGradient id="c1" x2="0.300" y2="1"><stop stopColor="#1a6fe0" /><stop offset="0.500" stopColor="#2fbf8f" /><stop offset="1" stopColor="#f3c92e" /></linearGradient><linearGradient id="c2" x2="0" y2="1"><stop stopColor="#a45bea" /><stop offset="1" stopColor="#f5708a" /></linearGradient></defs><path d="M8 0H19Q22 0 23 4L24 8H17Q14 8 13 12L11 20H5Q0 20 1 14L4 4Q5 0 8 0Z" fill="url(#c1)" /><path d="M19 8H25Q30 8 29 14L26 23Q25 27 21 27H12Q9 27 8 22H13Q15 22 16 18Z" fill="url(#c2)" /></svg>
        <span className="absolute left-[6px] top-[19px] w-[23px] h-[10px] rounded-[3px] bg-[#fdc400] text-[9px] leading-[10px] font-bold text-center text-black">PRE</span>
      </div>
    </div>
  );
}

export default function App() {
  return (
    <div className="w-[1920px] h-[1080px] overflow-hidden flex flex-col bg-[#f9f9fb] font-['Open_Sans',sans-serif]">
      <TopTabs />
      <AddressBar />
      <div className="flex h-[886px] border-t border-[#dbe3e6] shrink-0">
        <Sidebar />
        <div className="grow flex flex-col bg-[#f9f9fb]">
          <Canvas />
          <div className="h-[52px] border-y border-[#e3e3e8] flex items-center pl-[12px] pr-[17px] text-[15.500px] tracking-[0px] text-[#80808a]">
            <span className="text-[#26262b] w-[136px] whitespace-nowrap tracking-[0.08px]">Event Debugger</span><span className="w-[54px]">Logs</span><span className="tracking-[0.9px]">JSON</span><span className="grow" />
            <Pin className="w-[17px] h-[17px] rotate-[40deg] text-[#0a8cf5]" strokeWidth={2} />
          </div>
        </div>
      </div>
      <div className="h-[26px] shrink-0 border-t border-[#dadae0] flex items-center justify-end text-[15px] text-[#80808a] pr-[13px]">
        <span className="tracking-[0.02px]">Last published 6 days ago</span>
        <span className="ml-[9px] w-px h-5 bg-[#dadae0]" />
        <Check className="ml-[14px] w-[18px] h-[18px] text-[#2b8a3e]" strokeWidth={2} />
      </div>
      <Taskbar />
    </div>
  );
}
